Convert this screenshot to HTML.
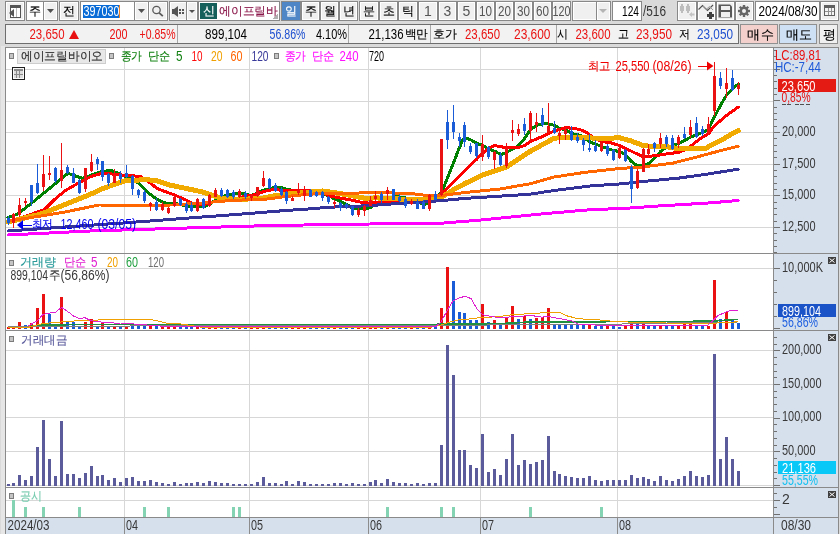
<!DOCTYPE html><html><head><meta charset="utf-8"><style>html,body{margin:0;padding:0;background:#d6d6d6;overflow:hidden}svg{display:block;will-change:transform}text{font-family:"Liberation Sans",sans-serif}</style></head><body><svg width="840" height="534" viewBox="0 0 840 534" font-family='"Liberation Sans", sans-serif' shape-rendering="crispEdges">
<rect x="0" y="0" width="840" height="534" fill="#dadada" />
<rect x="1" y="46" width="4" height="534" fill="#e6e6e6" />
<rect x="5" y="1" width="20" height="20" fill="#888888" />
<rect x="6" y="2" width="18" height="18" fill="#ffffff" />
<rect x="7" y="3" width="16" height="16" fill="#f0f0f0" />
<rect x="10" y="5" width="11" height="13" fill="#555555" />
<rect x="11" y="8" width="9" height="9" fill="#ffffff" />
<rect x="16" y="8" width="1" height="9" fill="#b8b8b8" />
<polygon points="9,13 14,9 14,17" fill="#555555" shape-rendering="auto"/>
<rect x="26" y="1" width="18" height="20" fill="#888888" />
<rect x="27" y="2" width="16" height="18" fill="#ffffff" />
<rect x="28" y="3" width="14" height="16" fill="#ffffff" />
<rect x="43" y="1" width="15" height="20" fill="#888888" />
<rect x="44" y="2" width="13" height="18" fill="#ffffff" />
<rect x="45" y="3" width="11" height="16" fill="#f0f0f0" />
<text x="34.5" y="16" fill="#000" font-size="14" text-anchor="middle" ><tspan font-size="12" baseline-shift="1" stroke="#000" stroke-width="0.15">주</tspan></text>
<polygon points="47,9 54,9 50.5,13" fill="#505050" shape-rendering="auto"/>
<rect x="59" y="1" width="20" height="20" fill="#888888" />
<rect x="60" y="2" width="18" height="18" fill="#ffffff" />
<rect x="61" y="3" width="16" height="16" fill="#f0f0f0" />
<text x="68.5" y="16" fill="#000" font-size="14" text-anchor="middle" ><tspan font-size="12" baseline-shift="1" stroke="#000" stroke-width="0.15">전</tspan></text>
<rect x="80" y="1" width="55" height="20" fill="#888888" />
<rect x="81" y="2" width="53" height="18" fill="#ffffff" />
<rect x="82" y="3" width="51" height="16" fill="#ffffff" />
<rect x="83" y="5" width="37" height="13" fill="#0a6cd6" />
<text x="83.5" y="16" fill="#ffffff" font-size="14" text-anchor="start" textLength="36" lengthAdjust="spacingAndGlyphs" >397030</text>
<rect x="119" y="5" width="1" height="13" fill="#f08020" />
<rect x="134" y="1" width="15" height="20" fill="#888888" />
<rect x="135" y="2" width="13" height="18" fill="#ffffff" />
<rect x="136" y="3" width="11" height="16" fill="#f0f0f0" />
<polygon points="138,9 145,9 141.5,13" fill="#505050" shape-rendering="auto"/>
<rect x="148" y="1" width="20" height="20" fill="#888888" />
<rect x="149" y="2" width="18" height="18" fill="#ffffff" />
<rect x="150" y="3" width="16" height="16" fill="#f0f0f0" />
<circle cx="156.5" cy="10" r="3.7" fill="none" stroke="#5a5a5a" stroke-width="1.3" shape-rendering="auto"/>
<line x1="159.2" y1="12.8" x2="162.8" y2="16.2" stroke="#5a5a5a" stroke-width="1.8" shape-rendering="auto"/>
<rect x="169" y="1" width="19" height="20" fill="#888888" />
<rect x="170" y="2" width="17" height="18" fill="#ffffff" />
<rect x="171" y="3" width="15" height="16" fill="#f0f0f0" />
<rect x="186" y="1" width="12" height="20" fill="#888888" />
<rect x="187" y="2" width="10" height="18" fill="#ffffff" />
<rect x="188" y="3" width="8" height="16" fill="#f0f0f0" />
<polygon points="172,9 174,9 178,6 178,17 174,14 172,14" fill="#555555" shape-rendering="auto"/>
<rect x="179" y="9" width="2" height="2" fill="#555555" />
<rect x="182" y="9" width="2" height="2" fill="#555555" />
<rect x="179" y="12" width="2" height="2" fill="#555555" />
<rect x="182" y="12" width="2" height="2" fill="#555555" />
<polygon points="189,10 195,10 192,13" fill="#505050" shape-rendering="auto"/>
<rect x="198" y="1" width="82" height="20" fill="#888888" />
<rect x="199" y="2" width="80" height="18" fill="#ffffff" />
<rect x="200" y="3" width="78" height="16" fill="#ffffff" />
<rect x="200" y="3" width="17" height="16" fill="#16605c" />
<text x="208.5" y="16" fill="#ffffff" font-size="14" text-anchor="middle" ><tspan font-size="12" baseline-shift="1" stroke="#ffffff" stroke-width="0.15">신</tspan></text>
<text x="219" y="16" fill="#8c1a4c" font-size="14" text-anchor="start" textLength="59" lengthAdjust="spacingAndGlyphs" ><tspan font-size="12" baseline-shift="1" stroke="#8c1a4c" stroke-width="0.15">에이프릴바</tspan></text>
<polygon points="278,13 278,19 272,19" fill="#b0b0b0"/>
<rect x="281" y="1" width="20" height="20" fill="#888888" />
<rect x="282" y="2" width="18" height="18" fill="#4f86c6" />
<text x="291.0" y="16" fill="#ffffff" font-size="14" text-anchor="middle" ><tspan font-size="12" baseline-shift="1" stroke="#ffffff" stroke-width="0.15">일</tspan></text>
<rect x="301" y="1" width="19" height="20" fill="#888888" />
<rect x="302" y="2" width="17" height="18" fill="#ffffff" />
<rect x="303" y="3" width="15" height="16" fill="#f0f0f0" />
<text x="310.5" y="16" fill="#000" font-size="14" text-anchor="middle" ><tspan font-size="12" baseline-shift="1" stroke="#000" stroke-width="0.15">주</tspan></text>
<rect x="320" y="1" width="19" height="20" fill="#888888" />
<rect x="321" y="2" width="17" height="18" fill="#ffffff" />
<rect x="322" y="3" width="15" height="16" fill="#f0f0f0" />
<text x="329.5" y="16" fill="#000" font-size="14" text-anchor="middle" ><tspan font-size="12" baseline-shift="1" stroke="#000" stroke-width="0.15">월</tspan></text>
<rect x="339" y="1" width="19" height="20" fill="#888888" />
<rect x="340" y="2" width="17" height="18" fill="#ffffff" />
<rect x="341" y="3" width="15" height="16" fill="#f0f0f0" />
<text x="348.5" y="16" fill="#000" font-size="14" text-anchor="middle" ><tspan font-size="12" baseline-shift="1" stroke="#000" stroke-width="0.15">년</tspan></text>
<rect x="359" y="1" width="20" height="20" fill="#888888" />
<rect x="360" y="2" width="18" height="18" fill="#ffffff" />
<rect x="361" y="3" width="16" height="16" fill="#f0f0f0" />
<text x="369.0" y="16" fill="#000" font-size="14" text-anchor="middle" ><tspan font-size="12" baseline-shift="1" stroke="#000" stroke-width="0.15">분</tspan></text>
<rect x="379" y="1" width="19" height="20" fill="#888888" />
<rect x="380" y="2" width="17" height="18" fill="#ffffff" />
<rect x="381" y="3" width="15" height="16" fill="#f0f0f0" />
<text x="388.5" y="16" fill="#000" font-size="14" text-anchor="middle" ><tspan font-size="12" baseline-shift="1" stroke="#000" stroke-width="0.15">초</tspan></text>
<rect x="398" y="1" width="20" height="20" fill="#888888" />
<rect x="399" y="2" width="18" height="18" fill="#ffffff" />
<rect x="400" y="3" width="16" height="16" fill="#f0f0f0" />
<text x="408.0" y="16" fill="#000" font-size="14" text-anchor="middle" ><tspan font-size="12" baseline-shift="1" stroke="#000" stroke-width="0.15">틱</tspan></text>
<rect x="418" y="1" width="20" height="20" fill="#888888" />
<rect x="419" y="2" width="18" height="18" fill="#ffffff" />
<rect x="420" y="3" width="16" height="16" fill="#f0f0f0" />
<text x="428.0" y="16" fill="#555555" font-size="14" text-anchor="middle" >1</text>
<rect x="438" y="1" width="19" height="20" fill="#888888" />
<rect x="439" y="2" width="17" height="18" fill="#ffffff" />
<rect x="440" y="3" width="15" height="16" fill="#f0f0f0" />
<text x="447.5" y="16" fill="#555555" font-size="14" text-anchor="middle" >3</text>
<rect x="457" y="1" width="19" height="20" fill="#888888" />
<rect x="458" y="2" width="17" height="18" fill="#ffffff" />
<rect x="459" y="3" width="15" height="16" fill="#f0f0f0" />
<text x="466.5" y="16" fill="#555555" font-size="14" text-anchor="middle" >5</text>
<rect x="476" y="1" width="19" height="20" fill="#888888" />
<rect x="477" y="2" width="17" height="18" fill="#ffffff" />
<rect x="478" y="3" width="15" height="16" fill="#f0f0f0" />
<text x="485.5" y="16" fill="#555555" font-size="14" text-anchor="middle" textLength="13" lengthAdjust="spacingAndGlyphs" >10</text>
<rect x="495" y="1" width="19" height="20" fill="#888888" />
<rect x="496" y="2" width="17" height="18" fill="#ffffff" />
<rect x="497" y="3" width="15" height="16" fill="#f0f0f0" />
<text x="504.5" y="16" fill="#555555" font-size="14" text-anchor="middle" textLength="13" lengthAdjust="spacingAndGlyphs" >20</text>
<rect x="514" y="1" width="19" height="20" fill="#888888" />
<rect x="515" y="2" width="17" height="18" fill="#ffffff" />
<rect x="516" y="3" width="15" height="16" fill="#f0f0f0" />
<text x="523.5" y="16" fill="#555555" font-size="14" text-anchor="middle" textLength="13" lengthAdjust="spacingAndGlyphs" >30</text>
<rect x="533" y="1" width="19" height="20" fill="#888888" />
<rect x="534" y="2" width="17" height="18" fill="#ffffff" />
<rect x="535" y="3" width="15" height="16" fill="#f0f0f0" />
<text x="542.5" y="16" fill="#555555" font-size="14" text-anchor="middle" textLength="13" lengthAdjust="spacingAndGlyphs" >60</text>
<rect x="552" y="1" width="19" height="20" fill="#888888" />
<rect x="553" y="2" width="17" height="18" fill="#ffffff" />
<rect x="554" y="3" width="15" height="16" fill="#f0f0f0" />
<text x="561.5" y="16" fill="#555555" font-size="14" text-anchor="middle" textLength="18" lengthAdjust="spacingAndGlyphs" >120</text>
<rect x="572" y="1" width="26" height="20" fill="#888888" />
<rect x="573" y="2" width="24" height="18" fill="#ffffff" />
<rect x="574" y="3" width="22" height="16" fill="#f0f0f0" />
<rect x="596" y="1" width="15" height="20" fill="#888888" />
<rect x="597" y="2" width="13" height="18" fill="#ffffff" />
<rect x="598" y="3" width="11" height="16" fill="#f0f0f0" />
<polygon points="599,9 607,9 603,13" fill="#b4b4b4" shape-rendering="auto"/>
<rect x="612" y="1" width="30" height="20" fill="#888888" />
<rect x="613" y="2" width="28" height="18" fill="#ffffff" />
<rect x="614" y="3" width="26" height="16" fill="#ffffff" />
<text x="622" y="16" fill="#000" font-size="14" text-anchor="start" textLength="17" lengthAdjust="spacingAndGlyphs" >124</text>
<text x="643" y="16" fill="#333333" font-size="14" text-anchor="start" textLength="23" lengthAdjust="spacingAndGlyphs" >/516</text>
<rect x="677" y="1" width="20" height="20" fill="#888888" />
<rect x="678" y="2" width="18" height="18" fill="#ffffff" />
<rect x="679" y="3" width="16" height="16" fill="#f0f0f0" />
<rect x="697" y="1" width="19" height="20" fill="#888888" />
<rect x="698" y="2" width="17" height="18" fill="#ffffff" />
<rect x="699" y="3" width="15" height="16" fill="#f0f0f0" />
<rect x="716" y="1" width="19" height="20" fill="#888888" />
<rect x="717" y="2" width="17" height="18" fill="#ffffff" />
<rect x="718" y="3" width="15" height="16" fill="#f0f0f0" />
<rect x="735" y="1" width="19" height="20" fill="#888888" />
<rect x="736" y="2" width="17" height="18" fill="#ffffff" />
<rect x="737" y="3" width="15" height="16" fill="#f0f0f0" />
<rect x="680" y="6" width="4" height="5" fill="#bdbdbd" />
<rect x="681" y="4" width="2" height="9" fill="#bdbdbd" />
<rect x="686" y="6" width="4" height="5" fill="#bdbdbd" />
<rect x="687" y="4" width="2" height="9" fill="#bdbdbd" />
<polygon points="689,14.5 692,12 692,13.5 694.5,13.5 694.5,15.5 692,15.5 692,17" fill="#c4c4c4" shape-rendering="auto"/>
<polyline points="698.5,9.5 702.5,5.5 707.5,10.5 713,5" fill="none" stroke="#505050" stroke-width="1.1" shape-rendering="auto"/>
<polyline points="703,6 706,9.5 709.5,6.5 713,10" fill="none" stroke="#9a9a9a" stroke-width="1" shape-rendering="auto"/>
<rect x="707" y="14" width="7" height="3" fill="#404040" />
<rect x="709" y="12" width="3" height="7" fill="#404040" />
<polygon points="718.5,4.5 730,4.5 732,6.5 732,17.5 718.5,17.5" fill="#5a5a5a" shape-rendering="auto"/>
<rect x="720" y="6" width="10" height="4" fill="#f0f0f0" />
<rect x="721" y="12" width="9" height="5" fill="#f0f0f0" />
<rect x="720" y="6" width="1" height="11" fill="#5a5a5a" />
<circle cx="744" cy="11" r="4.4" fill="#666666" shape-rendering="auto"/>
<line x1="744" y1="11" x2="750.00" y2="11.00" stroke="#666666" stroke-width="2.4" shape-rendering="auto"/>
<line x1="744" y1="11" x2="748.24" y2="15.24" stroke="#666666" stroke-width="2.4" shape-rendering="auto"/>
<line x1="744" y1="11" x2="744.00" y2="17.00" stroke="#666666" stroke-width="2.4" shape-rendering="auto"/>
<line x1="744" y1="11" x2="739.76" y2="15.24" stroke="#666666" stroke-width="2.4" shape-rendering="auto"/>
<line x1="744" y1="11" x2="738.00" y2="11.00" stroke="#666666" stroke-width="2.4" shape-rendering="auto"/>
<line x1="744" y1="11" x2="739.76" y2="6.76" stroke="#666666" stroke-width="2.4" shape-rendering="auto"/>
<line x1="744" y1="11" x2="744.00" y2="5.00" stroke="#666666" stroke-width="2.4" shape-rendering="auto"/>
<line x1="744" y1="11" x2="748.24" y2="6.76" stroke="#666666" stroke-width="2.4" shape-rendering="auto"/>
<circle cx="744" cy="11" r="2" fill="#f0f0f0" shape-rendering="auto"/>
<rect x="755" y="1" width="65" height="20" fill="#888888" />
<rect x="756" y="2" width="63" height="18" fill="#ffffff" />
<rect x="757" y="3" width="61" height="16" fill="#ffffff" />
<text x="758.5" y="16" fill="#000" font-size="14" text-anchor="start" textLength="59" lengthAdjust="spacingAndGlyphs" >2024/08/30</text>
<rect x="820" y="1" width="19" height="20" fill="#888888" />
<rect x="821" y="2" width="17" height="18" fill="#ffffff" />
<rect x="822" y="3" width="15" height="16" fill="#f0f0f0" />
<rect x="824" y="5" width="11" height="11" fill="#606060" />
<rect x="825" y="8" width="9" height="7" fill="#f4f4f4" />
<rect x="828" y="8" width="1" height="7" fill="#909090" />
<rect x="831" y="8" width="1" height="7" fill="#909090" />
<rect x="825" y="11" width="9" height="1" fill="#909090" />
<rect x="5" y="24" width="734" height="20" fill="#6e6e6e" />
<rect x="6" y="25" width="732" height="18" fill="#f2f2f2" />
<rect x="177" y="25" width="1" height="18" fill="#a8a8a8" />
<rect x="348" y="25" width="1" height="18" fill="#a8a8a8" />
<rect x="430" y="25" width="1" height="18" fill="#a8a8a8" />
<rect x="556" y="25" width="1" height="18" fill="#a8a8a8" />
<text x="29.5" y="39" fill="#ea1212" font-size="14" text-anchor="start" textLength="35" lengthAdjust="spacingAndGlyphs" >23,650</text>
<polygon points="69,39 79,39 74,30" fill="#e81010" shape-rendering="auto"/>
<text x="109.5" y="39" fill="#ea1212" font-size="14" text-anchor="start" textLength="18" lengthAdjust="spacingAndGlyphs" >200</text>
<text x="139.5" y="39" fill="#ea1212" font-size="14" text-anchor="start" textLength="36" lengthAdjust="spacingAndGlyphs" >+0.85%</text>
<text x="205" y="39" fill="#000" font-size="14" text-anchor="start" textLength="42" lengthAdjust="spacingAndGlyphs" >899,104</text>
<text x="269.5" y="39" fill="#1f50d0" font-size="14" text-anchor="start" textLength="36" lengthAdjust="spacingAndGlyphs" >56.86%</text>
<text x="316" y="39" fill="#000" font-size="14" text-anchor="start" textLength="31" lengthAdjust="spacingAndGlyphs" >4.10%</text>
<text x="368.5" y="39" fill="#000" font-size="14" text-anchor="start" textLength="35" lengthAdjust="spacingAndGlyphs" >21,136</text>
<text x="404.5" y="39" fill="#000" font-size="14" text-anchor="start" textLength="23.5" lengthAdjust="spacingAndGlyphs" ><tspan font-size="12" baseline-shift="1" stroke="#000" stroke-width="0.15">백만</tspan></text>
<text x="433" y="39" fill="#000" font-size="14" text-anchor="start" textLength="24" lengthAdjust="spacingAndGlyphs" ><tspan font-size="12" baseline-shift="1" stroke="#000" stroke-width="0.15">호가</tspan></text>
<text x="465" y="39" fill="#ea1212" font-size="14" text-anchor="start" textLength="35" lengthAdjust="spacingAndGlyphs" >23,650</text>
<text x="514" y="39" fill="#ea1212" font-size="14" text-anchor="start" textLength="36.5" lengthAdjust="spacingAndGlyphs" >23,600</text>
<text x="557" y="39" fill="#000" font-size="14" text-anchor="start" textLength="11" lengthAdjust="spacingAndGlyphs" ><tspan font-size="12" baseline-shift="1" stroke="#000" stroke-width="0.15">시</tspan></text>
<text x="575.5" y="39" fill="#ea1212" font-size="14" text-anchor="start" textLength="35" lengthAdjust="spacingAndGlyphs" >23,600</text>
<text x="618" y="39" fill="#000" font-size="14" text-anchor="start" textLength="11" lengthAdjust="spacingAndGlyphs" ><tspan font-size="12" baseline-shift="1" stroke="#000" stroke-width="0.15">고</tspan></text>
<text x="636" y="39" fill="#ea1212" font-size="14" text-anchor="start" textLength="36" lengthAdjust="spacingAndGlyphs" >23,950</text>
<text x="679" y="39" fill="#000" font-size="14" text-anchor="start" textLength="11" lengthAdjust="spacingAndGlyphs" ><tspan font-size="12" baseline-shift="1" stroke="#000" stroke-width="0.15">저</tspan></text>
<text x="697" y="39" fill="#1f50d0" font-size="14" text-anchor="start" textLength="36" lengthAdjust="spacingAndGlyphs" >23,050</text>
<rect x="740" y="24" width="38" height="20" fill="#909090" />
<rect x="741" y="25" width="36" height="18" fill="#f4d0cc" />
<rect x="742" y="26" width="34" height="16" fill="#f4d0cc" />
<text x="747" y="39.5" fill="#000" font-size="14" text-anchor="start" ><tspan font-size="12.5" baseline-shift="1" stroke="#000" stroke-width="0.15">매</tspan></text>
<text x="760.5" y="39.5" fill="#000" font-size="14" text-anchor="start" ><tspan font-size="12.5" baseline-shift="1" stroke="#000" stroke-width="0.15">수</tspan></text>
<rect x="779" y="24" width="38" height="20" fill="#909090" />
<rect x="780" y="25" width="36" height="18" fill="#cde0f4" />
<rect x="781" y="26" width="34" height="16" fill="#cde0f4" />
<text x="785.5" y="39.5" fill="#000" font-size="14" text-anchor="start" ><tspan font-size="12.5" baseline-shift="1" stroke="#000" stroke-width="0.15">매</tspan></text>
<text x="799" y="39.5" fill="#000" font-size="14" text-anchor="start" ><tspan font-size="12.5" baseline-shift="1" stroke="#000" stroke-width="0.15">도</tspan></text>
<rect x="819" y="24" width="19" height="20" fill="#909090" />
<rect x="820" y="25" width="17" height="18" fill="#f0f0f0" />
<rect x="821" y="26" width="15" height="16" fill="#f0f0f0" />
<text x="822.5" y="39.5" fill="#000" font-size="14" text-anchor="start" ><tspan font-size="12.5" baseline-shift="1" stroke="#000" stroke-width="0.15">평</tspan></text>
<rect x="5" y="47" width="834" height="487" fill="#8a8a8a" />
<rect x="6" y="48" width="767" height="486" fill="#ffffff" />
<rect x="774" y="48" width="64" height="486" fill="#d6e0ed" />
<rect x="6" y="253" width="832" height="1" fill="#8a8a8a" />
<rect x="6" y="330" width="832" height="1" fill="#8a8a8a" />
<rect x="6" y="487" width="832" height="1" fill="#8a8a8a" />
<rect x="6" y="517" width="832" height="1" fill="#8a8a8a" />
<rect x="773" y="48" width="1" height="486" fill="#8a8a8a" />
<rect x="6" y="518" width="767" height="16" fill="#d6e0ed" />
<rect x="6" y="69" width="767" height="1" fill="#d7d7d7" />
<rect x="6" y="101" width="767" height="1" fill="#d7d7d7" />
<rect x="6" y="132" width="767" height="1" fill="#d7d7d7" />
<rect x="6" y="164" width="767" height="1" fill="#d7d7d7" />
<rect x="6" y="195" width="767" height="1" fill="#d7d7d7" />
<rect x="6" y="227" width="767" height="1" fill="#d7d7d7" />
<rect x="6" y="268" width="767" height="1" fill="#d7d7d7" />
<rect x="6" y="350" width="767" height="1" fill="#d7d7d7" />
<rect x="6" y="384" width="767" height="1" fill="#d7d7d7" />
<rect x="6" y="417" width="767" height="1" fill="#d7d7d7" />
<rect x="6" y="451" width="767" height="1" fill="#d7d7d7" />
<rect x="6" y="485" width="767" height="1" fill="#d7d7d7" />
<rect x="6" y="500" width="767" height="1" fill="#d7d7d7" />
<rect x="124" y="48" width="1" height="205" fill="#d7d7d7" />
<rect x="124" y="254" width="1" height="76" fill="#d7d7d7" />
<rect x="124" y="331" width="1" height="156" fill="#d7d7d7" />
<rect x="124" y="488" width="1" height="29" fill="#d7d7d7" />
<rect x="124" y="518" width="1" height="16" fill="#8c8c8c" />
<rect x="249" y="48" width="1" height="205" fill="#d7d7d7" />
<rect x="249" y="254" width="1" height="76" fill="#d7d7d7" />
<rect x="249" y="331" width="1" height="156" fill="#d7d7d7" />
<rect x="249" y="488" width="1" height="29" fill="#d7d7d7" />
<rect x="249" y="518" width="1" height="16" fill="#8c8c8c" />
<rect x="368" y="48" width="1" height="205" fill="#d7d7d7" />
<rect x="368" y="254" width="1" height="76" fill="#d7d7d7" />
<rect x="368" y="331" width="1" height="156" fill="#d7d7d7" />
<rect x="368" y="488" width="1" height="29" fill="#d7d7d7" />
<rect x="368" y="518" width="1" height="16" fill="#8c8c8c" />
<rect x="480" y="48" width="1" height="205" fill="#d7d7d7" />
<rect x="480" y="254" width="1" height="76" fill="#d7d7d7" />
<rect x="480" y="331" width="1" height="156" fill="#d7d7d7" />
<rect x="480" y="488" width="1" height="29" fill="#d7d7d7" />
<rect x="480" y="518" width="1" height="16" fill="#8c8c8c" />
<rect x="617" y="48" width="1" height="205" fill="#d7d7d7" />
<rect x="617" y="254" width="1" height="76" fill="#d7d7d7" />
<rect x="617" y="331" width="1" height="156" fill="#d7d7d7" />
<rect x="617" y="488" width="1" height="29" fill="#d7d7d7" />
<rect x="617" y="518" width="1" height="16" fill="#8c8c8c" />
<rect x="9" y="53" width="5" height="6" fill="#7c7c7c" />
<rect x="10" y="54" width="3" height="4" fill="#c4c4c4" />
<rect x="17" y="49" width="89" height="15" fill="#cdcdcd" />
<rect x="18" y="50" width="87" height="13" fill="#e8e8e8" />
<text x="21" y="61" fill="#303030" font-size="14" text-anchor="start" textLength="82" lengthAdjust="spacingAndGlyphs" ><tspan font-size="12" baseline-shift="1" stroke="#303030" stroke-width="0.15">에이프릴바이오</tspan></text>
<rect x="109" y="53" width="5" height="6" fill="#7c7c7c" />
<rect x="110" y="54" width="3" height="4" fill="#c4c4c4" />
<text x="120.5" y="61" fill="#108010" font-size="14" text-anchor="start" textLength="21.5" lengthAdjust="spacingAndGlyphs" ><tspan font-size="12" baseline-shift="1" stroke="#108010" stroke-width="0.15">종가</tspan></text>
<text x="148" y="61" fill="#108010" font-size="14" text-anchor="start" textLength="22.5" lengthAdjust="spacingAndGlyphs" ><tspan font-size="12" baseline-shift="1" stroke="#108010" stroke-width="0.15">단순</tspan></text>
<text x="176" y="61" fill="#108010" font-size="14" text-anchor="start" textLength="6.5" lengthAdjust="spacingAndGlyphs" >5</text>
<text x="191.5" y="61" fill="#ff0a0a" font-size="14" text-anchor="start" textLength="11" lengthAdjust="spacingAndGlyphs" >10</text>
<text x="211" y="61" fill="#f0a000" font-size="14" text-anchor="start" textLength="11.5" lengthAdjust="spacingAndGlyphs" >20</text>
<text x="230.5" y="61" fill="#ff6400" font-size="14" text-anchor="start" textLength="12" lengthAdjust="spacingAndGlyphs" >60</text>
<text x="251.5" y="61" fill="#3a3a9a" font-size="14" text-anchor="start" textLength="17" lengthAdjust="spacingAndGlyphs" >120</text>
<rect x="274" y="53" width="5" height="6" fill="#7c7c7c" />
<rect x="275" y="54" width="3" height="4" fill="#c4c4c4" />
<text x="284.5" y="61" fill="#ff10ff" font-size="14" text-anchor="start" textLength="21.5" lengthAdjust="spacingAndGlyphs" ><tspan font-size="12" baseline-shift="1" stroke="#ff10ff" stroke-width="0.15">종가</tspan></text>
<text x="312" y="61" fill="#ff10ff" font-size="14" text-anchor="start" textLength="22.5" lengthAdjust="spacingAndGlyphs" ><tspan font-size="12" baseline-shift="1" stroke="#ff10ff" stroke-width="0.15">단순</tspan></text>
<text x="339.5" y="61" fill="#ff10ff" font-size="14" text-anchor="start" textLength="19" lengthAdjust="spacingAndGlyphs" >240</text>
<text x="369" y="61" fill="#000" font-size="14" text-anchor="start" textLength="15" lengthAdjust="spacingAndGlyphs" >720</text>
<rect x="12" y="67" width="13" height="13" fill="#202020" />
<rect x="13" y="68" width="11" height="11" fill="#f8f8f8" />
<rect x="14" y="69" width="9" height="2" fill="#8a8a8a" />
<rect x="14" y="71" width="9" height="7" fill="#dcdcdc" />
<rect x="16" y="71" width="1" height="7" fill="#8a8a8a" />
<rect x="19" y="71" width="1" height="7" fill="#8a8a8a" />
<rect x="14" y="74" width="9" height="1" fill="#8a8a8a" />
<g shape-rendering="crispEdges" stroke-linecap="round">
<polyline points="8.0,217.5 18.0,214.0 36.0,199.5 50.0,188.0 65.0,175.5 68.0,173.3 82.4,178.4 99.0,172.2 111.0,170.2 124.0,176.0 132.6,179.6 138.6,183.0 144.5,189.0 150.4,194.5 156.4,199.0 162.3,202.0 168.2,203.7 174.2,203.2 186.0,205.8 192.0,206.6 198.0,206.0 204.0,206.6 210.0,204.0 215.7,200.0 221.7,197.3 227.6,194.8 233.5,194.0 239.5,193.2 245.4,194.0 251.3,195.7 263.2,190.2 275.1,187.2 281.0,187.2 287.0,189.5 298.8,191.0 310.7,191.0 322.6,193.3 328.5,195.7 334.4,198.8 346.3,204.2 352.2,208.0 358.2,208.8 364.1,208.8 370.0,207.8 376.0,203.9 381.9,201.6 393.8,196.4 405.6,197.9 417.5,201.6 423.5,204.6 429.4,203.1 435.3,197.0 441.3,193.0 447.3,178.5 453.1,164.0 459.0,148.5 463.0,139.5 465.0,137.7 470.9,140.0 477.0,143.3 482.8,145.6 488.9,149.0 494.7,151.2 500.8,154.6 506.6,152.3 512.5,149.0 518.5,145.6 524.4,138.8 530.3,130.0 536.4,125.3 542.2,123.8 548.1,123.8 554.2,125.3 560.0,128.7 566.0,129.8 571.9,133.5 581.0,135.5 589.0,141.5 601.6,146.5 613.5,150.5 619.4,151.5 625.3,154.6 631.3,161.3 637.2,165.8 643.3,165.5 649.1,163.5 655.2,157.5 661.0,151.0 666.9,147.0 672.9,145.6 678.8,143.3 684.6,140.5 690.8,137.0 702.5,132.5 708.5,129.2 714.4,116.8 720.4,105.6 726.3,95.4 732.4,88.7 738.2,84.2" fill="none" stroke="#008000" stroke-width="3" stroke-linejoin="round" />
<polyline points="8.0,221.0 19.6,218.4 44.5,209.5 53.4,200.5 65.0,190.8 79.3,182.5 91.3,176.4 103.0,173.0 115.0,174.3 127.0,175.5 140.2,176.3 150.4,183.0 156.4,188.0 162.3,190.6 174.1,194.8 186.1,200.0 192.0,203.2 197.9,204.0 203.8,205.0 209.9,202.4 215.8,201.6 221.7,200.7 233.5,200.0 245.5,196.0 251.3,195.7 263.2,191.8 269.1,190.2 275.1,189.5 286.9,191.0 304.7,190.2 316.6,191.0 322.7,192.6 328.5,195.7 340.3,198.0 352.2,200.3 364.1,202.8 370.0,203.1 381.9,202.4 393.8,200.9 405.5,200.1 417.5,200.1 429.5,199.4 435.3,198.0 441.3,194.0 453.1,182.3 465.0,170.6 477.0,158.9 482.8,153.0 488.9,147.8 494.7,145.6 500.8,146.7 506.6,147.8 518.5,147.5 524.4,145.6 530.3,141.5 542.2,136.6 554.2,131.0 566.0,127.6 571.9,128.3 580.0,129.5 586.0,132.0 591.0,136.0 601.0,141.5 610.0,142.5 619.4,145.5 631.3,151.2 643.3,156.8 655.2,155.7 666.9,153.9 678.8,152.3 684.6,150.0 690.8,146.0 702.5,137.0 708.5,133.7 714.4,125.8 726.3,115.7 732.4,111.2 738.2,107.1" fill="none" stroke="#ff0000" stroke-width="3" stroke-linejoin="round" />
<polyline points="8.0,222.0 41.0,214.0 65.0,204.5 86.5,196.0 103.0,188.5 127.0,180.0 132.6,180.5 144.5,179.6 156.4,180.5 168.2,184.7 180.1,187.2 192.0,189.7 203.8,192.3 215.8,196.5 221.7,198.0 233.5,199.0 245.5,199.2 263.2,198.0 275.1,195.7 286.9,194.1 304.7,192.6 322.7,191.0 334.4,192.6 352.2,195.7 365.0,198.3 376.0,197.9 393.8,198.7 405.5,199.4 417.5,199.4 429.5,200.0 441.3,197.5 453.0,190.0 465.0,183.5 482.8,175.0 506.4,167.0 520.0,158.0 530.0,151.5 536.4,148.0 554.2,138.2 566.0,137.5 583.8,137.6 601.6,138.5 619.4,137.8 631.3,141.0 643.3,145.6 655.2,146.7 666.9,146.7 678.8,148.8 690.8,149.0 705.0,148.7 713.3,144.0 723.5,139.0 732.4,133.5 738.2,130.5" fill="none" stroke="#f0aa00" stroke-width="5" stroke-linejoin="round" />
<polyline points="8.0,221.0 41.0,216.0 65.0,212.0 99.0,205.0 127.0,205.2 174.1,205.0 186.1,204.0 203.8,203.2 215.8,201.6 233.5,200.5 250.0,199.5 263.2,199.5 287.0,196.4 310.7,194.1 328.5,193.3 352.2,193.3 370.0,192.5 381.9,192.7 405.5,193.4 417.5,194.2 429.5,196.0 441.3,195.5 465.0,192.5 500.0,189.0 530.0,183.8 554.2,177.0 583.8,172.5 619.3,168.5 643.3,166.9 672.6,163.2 695.0,157.5 718.0,151.3 738.2,146.2" fill="none" stroke="#ff6600" stroke-width="3" stroke-linejoin="round" />
<polyline points="8.0,231.0 130.0,222.5 250.0,213.4 287.0,210.4 310.7,208.8 328.5,207.3 346.3,206.5 370.0,205.7 381.9,204.6 405.5,203.1 429.5,201.6 450.0,199.8 465.0,198.4 500.8,196.1 530.0,194.2 554.2,190.5 589.7,186.0 619.3,184.0 643.3,181.5 678.8,178.1 710.0,173.7 738.2,169.2" fill="none" stroke="#333399" stroke-width="3" stroke-linejoin="round" />
<polyline points="8.0,235.0 90.0,231.0 181.0,228.2 271.0,225.5 370.0,224.0 438.0,223.5 481.0,220.0 543.0,213.8 587.0,210.0 630.0,208.0 655.0,206.2 710.0,202.9 738.2,200.5" fill="none" stroke="#ff00ff" stroke-width="3" stroke-linejoin="round" />
</g>
<rect x="8" y="216" width="1" height="9" fill="#1a5cd8" />
<rect x="7" y="218" width="3" height="5" fill="#1a5cd8" />
<rect x="13" y="213" width="1" height="15" fill="#ea1212" />
<rect x="12" y="214" width="3" height="9" fill="#ea1212" />
<rect x="19" y="198" width="1" height="19" fill="#ea1212" />
<rect x="18" y="205" width="3" height="10" fill="#ea1212" />
<rect x="25" y="198" width="1" height="8" fill="#ea1212" />
<rect x="24" y="201" width="3" height="2" fill="#ea1212" />
<rect x="31" y="185" width="1" height="21" fill="#1a5cd8" />
<rect x="30" y="185" width="3" height="17" fill="#1a5cd8" />
<rect x="37" y="164" width="1" height="30" fill="#1a5cd8" />
<rect x="36" y="183" width="3" height="10" fill="#1a5cd8" />
<rect x="43" y="155" width="1" height="36" fill="#ea1212" />
<rect x="42" y="174" width="3" height="13" fill="#ea1212" />
<rect x="49" y="156" width="1" height="24" fill="#ea1212" />
<rect x="48" y="173" width="3" height="2" fill="#ea1212" />
<rect x="55" y="167" width="1" height="16" fill="#1a5cd8" />
<rect x="54" y="168" width="3" height="13" fill="#1a5cd8" />
<rect x="61" y="143" width="1" height="45" fill="#ea1212" />
<rect x="60" y="170" width="3" height="11" fill="#ea1212" />
<rect x="67" y="165" width="1" height="9" fill="#1a5cd8" />
<rect x="66" y="167" width="3" height="6" fill="#1a5cd8" />
<rect x="73" y="168" width="1" height="15" fill="#1a5cd8" />
<rect x="72" y="173" width="3" height="10" fill="#1a5cd8" />
<rect x="79" y="179" width="1" height="15" fill="#1a5cd8" />
<rect x="78" y="180" width="3" height="13" fill="#1a5cd8" />
<rect x="85" y="168" width="1" height="24" fill="#ea1212" />
<rect x="84" y="168" width="3" height="21" fill="#ea1212" />
<rect x="91" y="154" width="1" height="18" fill="#ea1212" />
<rect x="90" y="162" width="3" height="9" fill="#ea1212" />
<rect x="97" y="157" width="1" height="13" fill="#1a5cd8" />
<rect x="96" y="159" width="3" height="5" fill="#1a5cd8" />
<rect x="102" y="161" width="1" height="20" fill="#1a5cd8" />
<rect x="101" y="161" width="3" height="16" fill="#1a5cd8" />
<rect x="108" y="173" width="1" height="13" fill="#1a5cd8" />
<rect x="107" y="174" width="3" height="9" fill="#1a5cd8" />
<rect x="114" y="169" width="1" height="14" fill="#ea1212" />
<rect x="113" y="175" width="3" height="8" fill="#ea1212" />
<rect x="120" y="171" width="1" height="12" fill="#1a5cd8" />
<rect x="119" y="174" width="3" height="5" fill="#1a5cd8" />
<rect x="126" y="165" width="1" height="13" fill="#1a5cd8" />
<rect x="125" y="173" width="3" height="4" fill="#1a5cd8" />
<rect x="132" y="175" width="1" height="20" fill="#1a5cd8" />
<rect x="131" y="176" width="3" height="13" fill="#1a5cd8" />
<rect x="138" y="189" width="1" height="9" fill="#1a5cd8" />
<rect x="137" y="190" width="3" height="5" fill="#1a5cd8" />
<rect x="144" y="190" width="1" height="13" fill="#1a5cd8" />
<rect x="143" y="192" width="3" height="9" fill="#1a5cd8" />
<rect x="150" y="202" width="1" height="9" fill="#ea1212" />
<rect x="149" y="203" width="3" height="3" fill="#ea1212" />
<rect x="156" y="198" width="1" height="13" fill="#1a5cd8" />
<rect x="155" y="202" width="3" height="8" fill="#1a5cd8" />
<rect x="162" y="202" width="1" height="9" fill="#ea1212" />
<rect x="161" y="204" width="3" height="6" fill="#ea1212" />
<rect x="168" y="207" width="1" height="7" fill="#ea1212" />
<rect x="167" y="208" width="3" height="5" fill="#ea1212" />
<rect x="174" y="196" width="1" height="11" fill="#ea1212" />
<rect x="173" y="197" width="3" height="9" fill="#ea1212" />
<rect x="180" y="198" width="1" height="8" fill="#1a5cd8" />
<rect x="179" y="199" width="3" height="6" fill="#1a5cd8" />
<rect x="186" y="202" width="1" height="11" fill="#1a5cd8" />
<rect x="185" y="204" width="3" height="7" fill="#1a5cd8" />
<rect x="191" y="202" width="1" height="10" fill="#1a5cd8" />
<rect x="190" y="205" width="3" height="6" fill="#1a5cd8" />
<rect x="197" y="198" width="1" height="14" fill="#ea1212" />
<rect x="196" y="199" width="3" height="12" fill="#ea1212" />
<rect x="203" y="198" width="1" height="11" fill="#1a5cd8" />
<rect x="202" y="199" width="3" height="9" fill="#1a5cd8" />
<rect x="209" y="194" width="1" height="13" fill="#ea1212" />
<rect x="208" y="195" width="3" height="11" fill="#ea1212" />
<rect x="215" y="188" width="1" height="9" fill="#ea1212" />
<rect x="214" y="190" width="3" height="7" fill="#ea1212" />
<rect x="221" y="188" width="1" height="9" fill="#1a5cd8" />
<rect x="220" y="190" width="3" height="6" fill="#1a5cd8" />
<rect x="227" y="189" width="1" height="9" fill="#1a5cd8" />
<rect x="226" y="190" width="3" height="7" fill="#1a5cd8" />
<rect x="233" y="190" width="1" height="9" fill="#1a5cd8" />
<rect x="232" y="192" width="3" height="5" fill="#1a5cd8" />
<rect x="239" y="189" width="1" height="9" fill="#ea1212" />
<rect x="238" y="191" width="3" height="6" fill="#ea1212" />
<rect x="245" y="191" width="1" height="8" fill="#1a5cd8" />
<rect x="244" y="193" width="3" height="4" fill="#1a5cd8" />
<rect x="251" y="194" width="1" height="7" fill="#ea1212" />
<rect x="250" y="195" width="3" height="3" fill="#ea1212" />
<rect x="257" y="187" width="1" height="10" fill="#ea1212" />
<rect x="256" y="187" width="3" height="9" fill="#ea1212" />
<rect x="263" y="171" width="1" height="16" fill="#ea1212" />
<rect x="262" y="178" width="3" height="8" fill="#ea1212" />
<rect x="269" y="178" width="1" height="11" fill="#1a5cd8" />
<rect x="268" y="179" width="3" height="9" fill="#1a5cd8" />
<rect x="275" y="183" width="1" height="9" fill="#1a5cd8" />
<rect x="274" y="185" width="3" height="6" fill="#1a5cd8" />
<rect x="281" y="187" width="1" height="9" fill="#1a5cd8" />
<rect x="280" y="189" width="3" height="6" fill="#1a5cd8" />
<rect x="286" y="191" width="1" height="13" fill="#1a5cd8" />
<rect x="285" y="192" width="3" height="9" fill="#1a5cd8" />
<rect x="292" y="196" width="1" height="5" fill="#ea1212" />
<rect x="291" y="198" width="3" height="3" fill="#ea1212" />
<rect x="298" y="183" width="1" height="12" fill="#ea1212" />
<rect x="297" y="190" width="3" height="3" fill="#ea1212" />
<rect x="304" y="186" width="1" height="15" fill="#ea1212" />
<rect x="303" y="190" width="3" height="6" fill="#ea1212" />
<rect x="310" y="189" width="1" height="8" fill="#1a5cd8" />
<rect x="309" y="190" width="3" height="7" fill="#1a5cd8" />
<rect x="316" y="191" width="1" height="6" fill="#1a5cd8" />
<rect x="315" y="192" width="3" height="4" fill="#1a5cd8" />
<rect x="322" y="191" width="1" height="10" fill="#1a5cd8" />
<rect x="321" y="192" width="3" height="6" fill="#1a5cd8" />
<rect x="328" y="196" width="1" height="8" fill="#1a5cd8" />
<rect x="327" y="197" width="3" height="5" fill="#1a5cd8" />
<rect x="334" y="200" width="1" height="8" fill="#ea1212" />
<rect x="333" y="202" width="3" height="2" fill="#ea1212" />
<rect x="340" y="202" width="1" height="9" fill="#1a5cd8" />
<rect x="339" y="203" width="3" height="5" fill="#1a5cd8" />
<rect x="346" y="203" width="1" height="6" fill="#1a5cd8" />
<rect x="345" y="204" width="3" height="3" fill="#1a5cd8" />
<rect x="352" y="206" width="1" height="10" fill="#1a5cd8" />
<rect x="351" y="206" width="3" height="9" fill="#1a5cd8" />
<rect x="358" y="208" width="1" height="9" fill="#ea1212" />
<rect x="357" y="210" width="3" height="5" fill="#ea1212" />
<rect x="364" y="205" width="1" height="11" fill="#ea1212" />
<rect x="363" y="206" width="3" height="5" fill="#ea1212" />
<rect x="370" y="196" width="1" height="10" fill="#ea1212" />
<rect x="369" y="200" width="3" height="6" fill="#ea1212" />
<rect x="375" y="191" width="1" height="10" fill="#ea1212" />
<rect x="374" y="196" width="3" height="3" fill="#ea1212" />
<rect x="381" y="192" width="1" height="11" fill="#1a5cd8" />
<rect x="380" y="194" width="3" height="6" fill="#1a5cd8" />
<rect x="387" y="187" width="1" height="13" fill="#ea1212" />
<rect x="386" y="190" width="3" height="4" fill="#ea1212" />
<rect x="393" y="189" width="1" height="11" fill="#1a5cd8" />
<rect x="392" y="189" width="3" height="11" fill="#1a5cd8" />
<rect x="399" y="194" width="1" height="8" fill="#1a5cd8" />
<rect x="398" y="197" width="3" height="4" fill="#1a5cd8" />
<rect x="405" y="197" width="1" height="11" fill="#1a5cd8" />
<rect x="404" y="199" width="3" height="7" fill="#1a5cd8" />
<rect x="411" y="199" width="1" height="6" fill="#ea1212" />
<rect x="410" y="201" width="3" height="3" fill="#ea1212" />
<rect x="417" y="199" width="1" height="10" fill="#1a5cd8" />
<rect x="416" y="202" width="3" height="7" fill="#1a5cd8" />
<rect x="423" y="200" width="1" height="9" fill="#1a5cd8" />
<rect x="422" y="202" width="3" height="7" fill="#1a5cd8" />
<rect x="429" y="194" width="1" height="17" fill="#ea1212" />
<rect x="428" y="195" width="3" height="14" fill="#ea1212" />
<rect x="435" y="191" width="1" height="9" fill="#1a5cd8" />
<rect x="434" y="194" width="3" height="6" fill="#1a5cd8" />
<rect x="441" y="139" width="1" height="57" fill="#ea1212" />
<rect x="440" y="139" width="3" height="56" fill="#ea1212" />
<rect x="447" y="110" width="1" height="39" fill="#1a5cd8" />
<rect x="446" y="122" width="3" height="18" fill="#1a5cd8" />
<rect x="453" y="105" width="1" height="34" fill="#1a5cd8" />
<rect x="452" y="122" width="3" height="10" fill="#1a5cd8" />
<rect x="459" y="133" width="1" height="14" fill="#1a5cd8" />
<rect x="458" y="137" width="3" height="4" fill="#1a5cd8" />
<rect x="464" y="122" width="1" height="25" fill="#1a5cd8" />
<rect x="463" y="125" width="3" height="17" fill="#1a5cd8" />
<rect x="470" y="143" width="1" height="11" fill="#1a5cd8" />
<rect x="469" y="146" width="3" height="6" fill="#1a5cd8" />
<rect x="476" y="143" width="1" height="15" fill="#1a5cd8" />
<rect x="475" y="143" width="3" height="13" fill="#1a5cd8" />
<rect x="482" y="135" width="1" height="26" fill="#ea1212" />
<rect x="481" y="144" width="3" height="13" fill="#ea1212" />
<rect x="488" y="146" width="1" height="13" fill="#1a5cd8" />
<rect x="487" y="147" width="3" height="10" fill="#1a5cd8" />
<rect x="494" y="151" width="1" height="18" fill="#ea1212" />
<rect x="493" y="152" width="3" height="8" fill="#ea1212" />
<rect x="500" y="152" width="1" height="14" fill="#1a5cd8" />
<rect x="499" y="155" width="3" height="10" fill="#1a5cd8" />
<rect x="506" y="143" width="1" height="25" fill="#ea1212" />
<rect x="505" y="148" width="3" height="18" fill="#ea1212" />
<rect x="512" y="120" width="1" height="21" fill="#ea1212" />
<rect x="511" y="130" width="3" height="3" fill="#ea1212" />
<rect x="518" y="124" width="1" height="12" fill="#ea1212" />
<rect x="517" y="129" width="3" height="5" fill="#ea1212" />
<rect x="524" y="118" width="1" height="17" fill="#1a5cd8" />
<rect x="523" y="124" width="3" height="7" fill="#1a5cd8" />
<rect x="530" y="111" width="1" height="30" fill="#ea1212" />
<rect x="529" y="113" width="3" height="18" fill="#ea1212" />
<rect x="536" y="113" width="1" height="19" fill="#ea1212" />
<rect x="535" y="122" width="3" height="3" fill="#ea1212" />
<rect x="542" y="108" width="1" height="19" fill="#1a5cd8" />
<rect x="541" y="115" width="3" height="10" fill="#1a5cd8" />
<rect x="548" y="103" width="1" height="30" fill="#ea1212" />
<rect x="547" y="126" width="3" height="6" fill="#ea1212" />
<rect x="554" y="121" width="1" height="13" fill="#1a5cd8" />
<rect x="553" y="128" width="3" height="5" fill="#1a5cd8" />
<rect x="559" y="128" width="1" height="16" fill="#ea1212" />
<rect x="558" y="133" width="3" height="3" fill="#ea1212" />
<rect x="565" y="126" width="1" height="14" fill="#ea1212" />
<rect x="564" y="130" width="3" height="4" fill="#ea1212" />
<rect x="571" y="126" width="1" height="15" fill="#1a5cd8" />
<rect x="570" y="131" width="3" height="9" fill="#1a5cd8" />
<rect x="577" y="133" width="1" height="10" fill="#1a5cd8" />
<rect x="576" y="137" width="3" height="4" fill="#1a5cd8" />
<rect x="583" y="138" width="1" height="13" fill="#1a5cd8" />
<rect x="582" y="140" width="3" height="5" fill="#1a5cd8" />
<rect x="589" y="134" width="1" height="18" fill="#1a5cd8" />
<rect x="588" y="148" width="3" height="2" fill="#1a5cd8" />
<rect x="595" y="140" width="1" height="12" fill="#1a5cd8" />
<rect x="594" y="146" width="3" height="5" fill="#1a5cd8" />
<rect x="601" y="141" width="1" height="11" fill="#ea1212" />
<rect x="600" y="143" width="3" height="8" fill="#ea1212" />
<rect x="607" y="144" width="1" height="12" fill="#1a5cd8" />
<rect x="606" y="146" width="3" height="8" fill="#1a5cd8" />
<rect x="613" y="149" width="1" height="12" fill="#1a5cd8" />
<rect x="612" y="150" width="3" height="10" fill="#1a5cd8" />
<rect x="619" y="146" width="1" height="13" fill="#ea1212" />
<rect x="618" y="148" width="3" height="10" fill="#ea1212" />
<rect x="625" y="149" width="1" height="13" fill="#1a5cd8" />
<rect x="624" y="150" width="3" height="11" fill="#1a5cd8" />
<rect x="631" y="165" width="1" height="38" fill="#1a5cd8" />
<rect x="630" y="167" width="3" height="22" fill="#1a5cd8" />
<rect x="637" y="169" width="1" height="20" fill="#ea1212" />
<rect x="636" y="171" width="3" height="17" fill="#ea1212" />
<rect x="643" y="148" width="1" height="24" fill="#ea1212" />
<rect x="642" y="149" width="3" height="23" fill="#ea1212" />
<rect x="648" y="144" width="1" height="14" fill="#ea1212" />
<rect x="647" y="149" width="3" height="5" fill="#ea1212" />
<rect x="654" y="142" width="1" height="10" fill="#1a5cd8" />
<rect x="653" y="143" width="3" height="5" fill="#1a5cd8" />
<rect x="660" y="133" width="1" height="15" fill="#ea1212" />
<rect x="659" y="138" width="3" height="6" fill="#ea1212" />
<rect x="666" y="135" width="1" height="12" fill="#1a5cd8" />
<rect x="665" y="137" width="3" height="7" fill="#1a5cd8" />
<rect x="672" y="135" width="1" height="15" fill="#1a5cd8" />
<rect x="671" y="138" width="3" height="11" fill="#1a5cd8" />
<rect x="678" y="135" width="1" height="13" fill="#ea1212" />
<rect x="677" y="137" width="3" height="7" fill="#ea1212" />
<rect x="684" y="127" width="1" height="12" fill="#1a5cd8" />
<rect x="683" y="134" width="3" height="4" fill="#1a5cd8" />
<rect x="690" y="120" width="1" height="18" fill="#ea1212" />
<rect x="689" y="127" width="3" height="8" fill="#ea1212" />
<rect x="696" y="117" width="1" height="21" fill="#1a5cd8" />
<rect x="695" y="123" width="3" height="14" fill="#1a5cd8" />
<rect x="702" y="126" width="1" height="10" fill="#1a5cd8" />
<rect x="701" y="129" width="3" height="5" fill="#1a5cd8" />
<rect x="708" y="117" width="1" height="18" fill="#ea1212" />
<rect x="707" y="124" width="3" height="9" fill="#ea1212" />
<rect x="714" y="62" width="1" height="54" fill="#ea1212" />
<rect x="713" y="76" width="3" height="35" fill="#ea1212" />
<rect x="720" y="72" width="1" height="17" fill="#1a5cd8" />
<rect x="719" y="78" width="3" height="8" fill="#1a5cd8" />
<rect x="726" y="68" width="1" height="30" fill="#ea1212" />
<rect x="725" y="83" width="3" height="6" fill="#ea1212" />
<rect x="732" y="70" width="1" height="21" fill="#1a5cd8" />
<rect x="731" y="78" width="3" height="12" fill="#1a5cd8" />
<rect x="738" y="82" width="1" height="13" fill="#ea1212" />
<rect x="737" y="85" width="3" height="4" fill="#ea1212" />
<polygon points="17,225 23,220 23,230" fill="#0000f0" shape-rendering="auto"/>
<rect x="23" y="225" width="9" height="1" fill="#0000f0" />
<text x="31.5" y="229" fill="#0000f0" font-size="14" text-anchor="start" textLength="21.5" lengthAdjust="spacingAndGlyphs" ><tspan font-size="12" baseline-shift="1" stroke="#0000f0" stroke-width="0.15">최저</tspan></text>
<text x="60.5" y="229" fill="#0000f0" font-size="14" text-anchor="start" textLength="33" lengthAdjust="spacingAndGlyphs" >12,460</text>
<text x="97.5" y="229" fill="#0000f0" font-size="14" text-anchor="start" textLength="38.5" lengthAdjust="spacingAndGlyphs" >(03/05)</text>
<text x="587.5" y="70.5" fill="#f00000" font-size="14" text-anchor="start" textLength="22.5" lengthAdjust="spacingAndGlyphs" ><tspan font-size="12" baseline-shift="1" stroke="#f00000" stroke-width="0.15">최고</tspan></text>
<text x="615.5" y="70.5" fill="#f00000" font-size="14" text-anchor="start" textLength="34" lengthAdjust="spacingAndGlyphs" >25,550</text>
<text x="652.5" y="70.5" fill="#f00000" font-size="14" text-anchor="start" textLength="39" lengthAdjust="spacingAndGlyphs" >(08/26)</text>
<rect x="698" y="66" width="10" height="1" fill="#f00000" />
<polygon points="713.5,66 707,61.5 707,70.5" fill="#f00000" shape-rendering="auto"/>
<rect x="774" y="50" width="3" height="1" fill="#707070" />
<rect x="774" y="56" width="3" height="1" fill="#707070" />
<rect x="774" y="62" width="3" height="1" fill="#707070" />
<rect x="774" y="69" width="6" height="1" fill="#707070" />
<rect x="774" y="75" width="3" height="1" fill="#707070" />
<rect x="774" y="81" width="3" height="1" fill="#707070" />
<rect x="774" y="88" width="3" height="1" fill="#707070" />
<rect x="774" y="94" width="3" height="1" fill="#707070" />
<rect x="774" y="100" width="6" height="1" fill="#707070" />
<rect x="774" y="107" width="3" height="1" fill="#707070" />
<rect x="774" y="113" width="3" height="1" fill="#707070" />
<rect x="774" y="119" width="3" height="1" fill="#707070" />
<rect x="774" y="126" width="3" height="1" fill="#707070" />
<rect x="774" y="132" width="6" height="1" fill="#707070" />
<rect x="774" y="138" width="3" height="1" fill="#707070" />
<rect x="774" y="145" width="3" height="1" fill="#707070" />
<rect x="774" y="151" width="3" height="1" fill="#707070" />
<rect x="774" y="157" width="3" height="1" fill="#707070" />
<rect x="774" y="164" width="6" height="1" fill="#707070" />
<rect x="774" y="170" width="3" height="1" fill="#707070" />
<rect x="774" y="176" width="3" height="1" fill="#707070" />
<rect x="774" y="183" width="3" height="1" fill="#707070" />
<rect x="774" y="189" width="3" height="1" fill="#707070" />
<rect x="774" y="195" width="6" height="1" fill="#707070" />
<rect x="774" y="202" width="3" height="1" fill="#707070" />
<rect x="774" y="208" width="3" height="1" fill="#707070" />
<rect x="774" y="214" width="3" height="1" fill="#707070" />
<rect x="774" y="221" width="3" height="1" fill="#707070" />
<rect x="774" y="227" width="6" height="1" fill="#707070" />
<rect x="774" y="233" width="3" height="1" fill="#707070" />
<rect x="774" y="240" width="3" height="1" fill="#707070" />
<rect x="774" y="246" width="3" height="1" fill="#707070" />
<rect x="774" y="252" width="3" height="1" fill="#707070" />
<text x="782" y="136" fill="#383838" font-size="14" text-anchor="start" textLength="33.5" lengthAdjust="spacingAndGlyphs" >20,000</text>
<text x="782" y="168" fill="#383838" font-size="14" text-anchor="start" textLength="33.5" lengthAdjust="spacingAndGlyphs" >17,500</text>
<text x="782" y="199" fill="#383838" font-size="14" text-anchor="start" textLength="33.5" lengthAdjust="spacingAndGlyphs" >15,000</text>
<text x="782" y="231" fill="#383838" font-size="14" text-anchor="start" textLength="33.5" lengthAdjust="spacingAndGlyphs" >12,500</text>
<text x="775" y="60" fill="#e81010" font-size="14" text-anchor="start" textLength="46" lengthAdjust="spacingAndGlyphs" >LC:89,81</text>
<text x="775" y="71.5" fill="#1f5ad8" font-size="14" text-anchor="start" textLength="46" lengthAdjust="spacingAndGlyphs" >HC:-7,44</text>
<rect x="778" y="79" width="58" height="13" fill="#e41a14" />
<text x="781.5" y="90.5" fill="#ffffff" font-size="14" text-anchor="start" textLength="34" lengthAdjust="spacingAndGlyphs" >23,650</text>
<text x="781.5" y="102" fill="#e81010" font-size="14" text-anchor="start" textLength="29" lengthAdjust="spacingAndGlyphs" >0,85%</text>
<rect x="782" y="104" width="4" height="1" fill="#505050" />
<rect x="787" y="104" width="4" height="1" fill="#505050" />
<rect x="795" y="104" width="4" height="1" fill="#505050" />
<rect x="800" y="104" width="4" height="1" fill="#505050" />
<rect x="806" y="104" width="4" height="1" fill="#505050" />
<rect x="9" y="260" width="5" height="6" fill="#7c7c7c" />
<rect x="10" y="261" width="3" height="4" fill="#c4c4c4" />
<text x="19.5" y="267" fill="#2a9a9a" font-size="14" text-anchor="start" textLength="36" lengthAdjust="spacingAndGlyphs" ><tspan font-size="12" baseline-shift="1" stroke="#2a9a9a" stroke-width="0.15">거래량</tspan></text>
<text x="64" y="267" fill="#e020d0" font-size="14" text-anchor="start" textLength="22.5" lengthAdjust="spacingAndGlyphs" ><tspan font-size="12" baseline-shift="1" stroke="#e020d0" stroke-width="0.15">단순</tspan></text>
<text x="91" y="267" fill="#e020d0" font-size="14" text-anchor="start" textLength="6.5" lengthAdjust="spacingAndGlyphs" >5</text>
<text x="107" y="267" fill="#f0a000" font-size="14" text-anchor="start" textLength="11" lengthAdjust="spacingAndGlyphs" >20</text>
<text x="126" y="267" fill="#20a040" font-size="14" text-anchor="start" textLength="12" lengthAdjust="spacingAndGlyphs" >60</text>
<text x="148" y="267" fill="#707070" font-size="14" text-anchor="start" textLength="16" lengthAdjust="spacingAndGlyphs" >120</text>
<text x="10.5" y="280" fill="#383838" font-size="14" text-anchor="start" textLength="37.5" lengthAdjust="spacingAndGlyphs" >899,104</text>
<text x="48.5" y="280" fill="#383838" font-size="14" text-anchor="start" textLength="11.5" lengthAdjust="spacingAndGlyphs" ><tspan font-size="12" baseline-shift="1" stroke="#383838" stroke-width="0.15">주</tspan></text>
<text x="60.5" y="280" fill="#383838" font-size="14" text-anchor="start" textLength="49" lengthAdjust="spacingAndGlyphs" >(56,86%)</text>
<rect x="7" y="327" width="3" height="2" fill="#ea1212" />
<rect x="12" y="326" width="3" height="3" fill="#ea1212" />
<rect x="18" y="322" width="3" height="7" fill="#ea1212" />
<rect x="24" y="325" width="3" height="4" fill="#1a5cd8" />
<rect x="30" y="323" width="3" height="6" fill="#ea1212" />
<rect x="36" y="308" width="3" height="21" fill="#ea1212" />
<rect x="42" y="294" width="3" height="35" fill="#ea1212" />
<rect x="48" y="314" width="3" height="15" fill="#1a5cd8" />
<rect x="54" y="325" width="3" height="4" fill="#1a5cd8" />
<rect x="60" y="297" width="3" height="32" fill="#ea1212" />
<rect x="66" y="322" width="3" height="7" fill="#1a5cd8" />
<rect x="72" y="322" width="3" height="7" fill="#1a5cd8" />
<rect x="78" y="326" width="3" height="3" fill="#1a5cd8" />
<rect x="84" y="322" width="3" height="7" fill="#ea1212" />
<rect x="90" y="319" width="3" height="10" fill="#ea1212" />
<rect x="96" y="326" width="3" height="3" fill="#1a5cd8" />
<rect x="101" y="323" width="3" height="6" fill="#ea1212" />
<rect x="107" y="326" width="3" height="3" fill="#1a5cd8" />
<rect x="113" y="326" width="3" height="3" fill="#ea1212" />
<rect x="119" y="326" width="3" height="3" fill="#1a5cd8" />
<rect x="125" y="326" width="3" height="3" fill="#ea1212" />
<rect x="131" y="326" width="3" height="3" fill="#1a5cd8" />
<rect x="137" y="326" width="3" height="3" fill="#1a5cd8" />
<rect x="143" y="326" width="3" height="3" fill="#1a5cd8" />
<rect x="149" y="326" width="3" height="3" fill="#ea1212" />
<rect x="155" y="326" width="3" height="3" fill="#1a5cd8" />
<rect x="161" y="326" width="3" height="3" fill="#ea1212" />
<rect x="167" y="326" width="3" height="3" fill="#ea1212" />
<rect x="173" y="326" width="3" height="3" fill="#ea1212" />
<rect x="179" y="326" width="3" height="3" fill="#1a5cd8" />
<rect x="185" y="326" width="3" height="3" fill="#1a5cd8" />
<rect x="190" y="326" width="3" height="3" fill="#1a5cd8" />
<rect x="196" y="326" width="3" height="3" fill="#ea1212" />
<rect x="202" y="326" width="3" height="3" fill="#1a5cd8" />
<rect x="208" y="326" width="3" height="3" fill="#ea1212" />
<rect x="214" y="326" width="3" height="3" fill="#ea1212" />
<rect x="220" y="326" width="3" height="3" fill="#1a5cd8" />
<rect x="226" y="326" width="3" height="3" fill="#1a5cd8" />
<rect x="232" y="326" width="3" height="3" fill="#1a5cd8" />
<rect x="238" y="326" width="3" height="3" fill="#ea1212" />
<rect x="244" y="326" width="3" height="3" fill="#1a5cd8" />
<rect x="250" y="326" width="3" height="3" fill="#ea1212" />
<rect x="256" y="326" width="3" height="3" fill="#ea1212" />
<rect x="262" y="326" width="3" height="3" fill="#ea1212" />
<rect x="268" y="326" width="3" height="3" fill="#1a5cd8" />
<rect x="274" y="326" width="3" height="3" fill="#1a5cd8" />
<rect x="280" y="326" width="3" height="3" fill="#1a5cd8" />
<rect x="285" y="326" width="3" height="3" fill="#1a5cd8" />
<rect x="291" y="326" width="3" height="3" fill="#ea1212" />
<rect x="297" y="326" width="3" height="3" fill="#ea1212" />
<rect x="303" y="326" width="3" height="3" fill="#ea1212" />
<rect x="309" y="326" width="3" height="3" fill="#1a5cd8" />
<rect x="315" y="326" width="3" height="3" fill="#1a5cd8" />
<rect x="321" y="326" width="3" height="3" fill="#1a5cd8" />
<rect x="327" y="326" width="3" height="3" fill="#1a5cd8" />
<rect x="333" y="326" width="3" height="3" fill="#ea1212" />
<rect x="339" y="326" width="3" height="3" fill="#1a5cd8" />
<rect x="345" y="326" width="3" height="3" fill="#1a5cd8" />
<rect x="351" y="326" width="3" height="3" fill="#1a5cd8" />
<rect x="357" y="326" width="3" height="3" fill="#ea1212" />
<rect x="363" y="326" width="3" height="3" fill="#ea1212" />
<rect x="369" y="326" width="3" height="3" fill="#ea1212" />
<rect x="374" y="326" width="3" height="3" fill="#ea1212" />
<rect x="380" y="326" width="3" height="3" fill="#1a5cd8" />
<rect x="386" y="326" width="3" height="3" fill="#ea1212" />
<rect x="392" y="326" width="3" height="3" fill="#1a5cd8" />
<rect x="398" y="326" width="3" height="3" fill="#1a5cd8" />
<rect x="404" y="326" width="3" height="3" fill="#1a5cd8" />
<rect x="410" y="326" width="3" height="3" fill="#ea1212" />
<rect x="416" y="326" width="3" height="3" fill="#1a5cd8" />
<rect x="422" y="326" width="3" height="3" fill="#1a5cd8" />
<rect x="428" y="326" width="3" height="3" fill="#ea1212" />
<rect x="434" y="326" width="3" height="3" fill="#1a5cd8" />
<rect x="440" y="308" width="3" height="21" fill="#ea1212" />
<rect x="446" y="267" width="3" height="62" fill="#ea1212" />
<rect x="452" y="281" width="3" height="48" fill="#1a5cd8" />
<rect x="458" y="312" width="3" height="17" fill="#1a5cd8" />
<rect x="463" y="313" width="3" height="16" fill="#1a5cd8" />
<rect x="469" y="320" width="3" height="9" fill="#1a5cd8" />
<rect x="475" y="320" width="3" height="9" fill="#1a5cd8" />
<rect x="481" y="304" width="3" height="25" fill="#ea1212" />
<rect x="487" y="322" width="3" height="7" fill="#1a5cd8" />
<rect x="493" y="320" width="3" height="9" fill="#ea1212" />
<rect x="499" y="325" width="3" height="4" fill="#1a5cd8" />
<rect x="505" y="318" width="3" height="11" fill="#ea1212" />
<rect x="511" y="306" width="3" height="23" fill="#ea1212" />
<rect x="517" y="319" width="3" height="10" fill="#1a5cd8" />
<rect x="523" y="316" width="3" height="13" fill="#ea1212" />
<rect x="529" y="319" width="3" height="10" fill="#1a5cd8" />
<rect x="535" y="318" width="3" height="11" fill="#ea1212" />
<rect x="541" y="317" width="3" height="12" fill="#ea1212" />
<rect x="547" y="308" width="3" height="21" fill="#ea1212" />
<rect x="553" y="324" width="3" height="5" fill="#1a5cd8" />
<rect x="558" y="324" width="3" height="5" fill="#1a5cd8" />
<rect x="564" y="324" width="3" height="5" fill="#1a5cd8" />
<rect x="570" y="324" width="3" height="5" fill="#1a5cd8" />
<rect x="576" y="325" width="3" height="4" fill="#1a5cd8" />
<rect x="582" y="325" width="3" height="4" fill="#1a5cd8" />
<rect x="588" y="325" width="3" height="4" fill="#ea1212" />
<rect x="594" y="326" width="3" height="3" fill="#1a5cd8" />
<rect x="600" y="326" width="3" height="3" fill="#1a5cd8" />
<rect x="606" y="326" width="3" height="3" fill="#ea1212" />
<rect x="612" y="326" width="3" height="3" fill="#1a5cd8" />
<rect x="618" y="327" width="3" height="2" fill="#1a5cd8" />
<rect x="624" y="325" width="3" height="4" fill="#ea1212" />
<rect x="630" y="324" width="3" height="5" fill="#ea1212" />
<rect x="636" y="324" width="3" height="5" fill="#1a5cd8" />
<rect x="642" y="324" width="3" height="5" fill="#ea1212" />
<rect x="647" y="325" width="3" height="4" fill="#1a5cd8" />
<rect x="653" y="326" width="3" height="3" fill="#1a5cd8" />
<rect x="659" y="326" width="3" height="3" fill="#ea1212" />
<rect x="665" y="326" width="3" height="3" fill="#1a5cd8" />
<rect x="671" y="326" width="3" height="3" fill="#1a5cd8" />
<rect x="677" y="326" width="3" height="3" fill="#ea1212" />
<rect x="683" y="324" width="3" height="5" fill="#ea1212" />
<rect x="689" y="322" width="3" height="7" fill="#ea1212" />
<rect x="695" y="326" width="3" height="3" fill="#1a5cd8" />
<rect x="701" y="326" width="3" height="3" fill="#1a5cd8" />
<rect x="707" y="326" width="3" height="3" fill="#ea1212" />
<rect x="713" y="280" width="3" height="49" fill="#ea1212" />
<rect x="719" y="319" width="3" height="10" fill="#1a5cd8" />
<rect x="725" y="312" width="3" height="17" fill="#ea1212" />
<rect x="731" y="320" width="3" height="9" fill="#1a5cd8" />
<rect x="737" y="323" width="3" height="6" fill="#1a5cd8" />
<g shape-rendering="crispEdges">
<polyline points="8.0,327.5 30.0,327.0 33.5,325.5 70.0,324.6 130.0,324.5 250.0,324.4 380.0,324.4 430.0,324.8 441.0,324.0 477.0,324.1 506.0,323.3 524.0,322.3 572.0,321.8 680.0,321.5 714.0,321.0 738.0,319.3" fill="none" stroke="#209040" stroke-width="1.6" stroke-linejoin="round" />
<polyline points="8.0,326.4 57.0,326.4 130.0,326.0 430.0,325.5 500.0,324.9 600.0,324.5 690.0,322.5 738.0,322.0" fill="none" stroke="#808080" stroke-width="1" stroke-linejoin="round" />
<polyline points="8.0,327.7 27.0,327.7 39.6,324.2 45.8,323.3 57.0,322.4 70.0,321.0 74.0,321.0 91.0,320.3 118.0,319.2 148.0,319.0 155.0,320.4 162.0,322.0 168.0,323.5 178.0,323.5 200.0,327.0 430.0,327.5 441.0,325.0 450.0,322.0 458.0,320.0 465.0,319.5 477.0,318.0 489.0,317.2 500.0,316.4 512.0,314.8 524.0,314.0 536.0,313.3 548.0,312.5 560.0,312.5 566.0,315.6 578.0,318.7 590.0,319.5 600.0,320.0 610.0,321.0 640.0,322.7 708.0,323.5 714.0,323.2 738.0,321.8" fill="none" stroke="#f0a000" stroke-width="1" stroke-linejoin="round" />
<polyline points="28.0,326.0 37.0,321.0 43.0,314.5 49.0,313.2 55.4,312.3 61.6,307.4 70.0,313.2 73.4,316.0 79.0,318.5 85.0,317.7 91.0,320.8 103.0,322.3 115.0,323.1 121.0,323.0 160.0,326.0 200.0,326.3 260.0,326.3 300.0,326.5 380.0,326.5 436.0,326.5 441.0,322.0 447.0,311.0 453.0,301.0 459.0,298.0 465.0,296.3 471.0,298.6 477.0,309.0 483.0,314.8 491.0,316.5 500.0,317.6 512.0,316.8 524.0,316.0 530.0,315.3 542.0,317.2 548.0,316.4 560.0,318.7 572.0,321.0 578.0,324.0 595.0,325.0 610.0,326.0 640.0,325.0 680.0,325.0 708.0,325.0 714.0,319.7 718.0,315.5 726.0,312.0 732.0,310.1 738.0,310.1" fill="none" stroke="#e020d0" stroke-width="1" stroke-linejoin="round" />
</g>
<rect x="774" y="268" width="6" height="1" fill="#707070" />
<rect x="774" y="280" width="3" height="1" fill="#707070" />
<rect x="774" y="292" width="3" height="1" fill="#707070" />
<rect x="774" y="304" width="3" height="1" fill="#707070" />
<rect x="774" y="316" width="3" height="1" fill="#707070" />
<rect x="774" y="328" width="6" height="1" fill="#707070" />
<text x="782" y="272" fill="#383838" font-size="14" text-anchor="start" textLength="41" lengthAdjust="spacingAndGlyphs" >10,000K</text>
<rect x="778" y="304" width="58" height="13" fill="#1a52c8" />
<text x="782" y="315.5" fill="#ffffff" font-size="14" text-anchor="start" textLength="39" lengthAdjust="spacingAndGlyphs" >899,104</text>
<text x="782" y="327" fill="#2060e0" font-size="14" text-anchor="start" textLength="36" lengthAdjust="spacingAndGlyphs" >56,86%</text>
<rect x="828" y="257" width="8" height="7" fill="#404040" />
<path d="M829.5,258.5 L834.5,262.5 M834.5,258.5 L829.5,262.5" stroke="#fff" stroke-width="1" shape-rendering="auto"/>
<rect x="9" y="336" width="5" height="6" fill="#7c7c7c" />
<rect x="10" y="337" width="3" height="4" fill="#c4c4c4" />
<text x="21" y="344.5" fill="#5a5a9c" font-size="14" text-anchor="start" textLength="46" lengthAdjust="spacingAndGlyphs" ><tspan font-size="12" baseline-shift="1" stroke="#5a5a9c" stroke-width="0.15">거래대금</tspan></text>
<rect x="7" y="484" width="3" height="2" fill="#5b5b9b" />
<rect x="12" y="483" width="3" height="3" fill="#5b5b9b" />
<rect x="18" y="475" width="3" height="11" fill="#5b5b9b" />
<rect x="24" y="480" width="3" height="6" fill="#5b5b9b" />
<rect x="30" y="476" width="3" height="10" fill="#5b5b9b" />
<rect x="36" y="447" width="3" height="39" fill="#5b5b9b" />
<rect x="42" y="420" width="3" height="66" fill="#5b5b9b" />
<rect x="48" y="459" width="3" height="27" fill="#5b5b9b" />
<rect x="54" y="476" width="3" height="10" fill="#5b5b9b" />
<rect x="60" y="421" width="3" height="65" fill="#5b5b9b" />
<rect x="66" y="474" width="3" height="12" fill="#5b5b9b" />
<rect x="72" y="474" width="3" height="12" fill="#5b5b9b" />
<rect x="78" y="478" width="3" height="8" fill="#5b5b9b" />
<rect x="84" y="473" width="3" height="13" fill="#5b5b9b" />
<rect x="90" y="466" width="3" height="20" fill="#5b5b9b" />
<rect x="96" y="476" width="3" height="10" fill="#5b5b9b" />
<rect x="101" y="475" width="3" height="11" fill="#5b5b9b" />
<rect x="107" y="480" width="3" height="6" fill="#5b5b9b" />
<rect x="113" y="478" width="3" height="8" fill="#5b5b9b" />
<rect x="119" y="482" width="3" height="4" fill="#5b5b9b" />
<rect x="125" y="478" width="3" height="8" fill="#5b5b9b" />
<rect x="131" y="477" width="3" height="9" fill="#5b5b9b" />
<rect x="137" y="481" width="3" height="5" fill="#5b5b9b" />
<rect x="143" y="481" width="3" height="5" fill="#5b5b9b" />
<rect x="149" y="480" width="3" height="6" fill="#5b5b9b" />
<rect x="155" y="482" width="3" height="4" fill="#5b5b9b" />
<rect x="161" y="483" width="3" height="3" fill="#5b5b9b" />
<rect x="167" y="484" width="3" height="2" fill="#5b5b9b" />
<rect x="173" y="482" width="3" height="4" fill="#5b5b9b" />
<rect x="179" y="484" width="3" height="2" fill="#5b5b9b" />
<rect x="185" y="483" width="3" height="3" fill="#5b5b9b" />
<rect x="190" y="483" width="3" height="3" fill="#5b5b9b" />
<rect x="196" y="482" width="3" height="4" fill="#5b5b9b" />
<rect x="202" y="483" width="3" height="3" fill="#5b5b9b" />
<rect x="208" y="481" width="3" height="5" fill="#5b5b9b" />
<rect x="214" y="482" width="3" height="4" fill="#5b5b9b" />
<rect x="220" y="483" width="3" height="3" fill="#5b5b9b" />
<rect x="226" y="483" width="3" height="3" fill="#5b5b9b" />
<rect x="232" y="484" width="3" height="2" fill="#5b5b9b" />
<rect x="238" y="484" width="3" height="2" fill="#5b5b9b" />
<rect x="244" y="484" width="3" height="2" fill="#5b5b9b" />
<rect x="250" y="484" width="3" height="2" fill="#5b5b9b" />
<rect x="256" y="482" width="3" height="4" fill="#5b5b9b" />
<rect x="262" y="477" width="3" height="9" fill="#5b5b9b" />
<rect x="268" y="483" width="3" height="3" fill="#5b5b9b" />
<rect x="274" y="483" width="3" height="3" fill="#5b5b9b" />
<rect x="280" y="484" width="3" height="2" fill="#5b5b9b" />
<rect x="285" y="481" width="3" height="5" fill="#5b5b9b" />
<rect x="291" y="484" width="3" height="2" fill="#5b5b9b" />
<rect x="297" y="481" width="3" height="5" fill="#5b5b9b" />
<rect x="303" y="482" width="3" height="4" fill="#5b5b9b" />
<rect x="309" y="484" width="3" height="2" fill="#5b5b9b" />
<rect x="315" y="484" width="3" height="2" fill="#5b5b9b" />
<rect x="321" y="484" width="3" height="2" fill="#5b5b9b" />
<rect x="327" y="484" width="3" height="2" fill="#5b5b9b" />
<rect x="333" y="483" width="3" height="3" fill="#5b5b9b" />
<rect x="339" y="483" width="3" height="3" fill="#5b5b9b" />
<rect x="345" y="484" width="3" height="2" fill="#5b5b9b" />
<rect x="351" y="483" width="3" height="3" fill="#5b5b9b" />
<rect x="357" y="484" width="3" height="2" fill="#5b5b9b" />
<rect x="363" y="484" width="3" height="2" fill="#5b5b9b" />
<rect x="369" y="482" width="3" height="4" fill="#5b5b9b" />
<rect x="374" y="480" width="3" height="6" fill="#5b5b9b" />
<rect x="380" y="483" width="3" height="3" fill="#5b5b9b" />
<rect x="386" y="479" width="3" height="7" fill="#5b5b9b" />
<rect x="392" y="482" width="3" height="4" fill="#5b5b9b" />
<rect x="398" y="483" width="3" height="3" fill="#5b5b9b" />
<rect x="404" y="483" width="3" height="3" fill="#5b5b9b" />
<rect x="410" y="484" width="3" height="2" fill="#5b5b9b" />
<rect x="416" y="483" width="3" height="3" fill="#5b5b9b" />
<rect x="422" y="484" width="3" height="2" fill="#5b5b9b" />
<rect x="428" y="483" width="3" height="3" fill="#5b5b9b" />
<rect x="434" y="483" width="3" height="3" fill="#5b5b9b" />
<rect x="440" y="445" width="3" height="41" fill="#5b5b9b" />
<rect x="446" y="345" width="3" height="141" fill="#5b5b9b" />
<rect x="452" y="375" width="3" height="111" fill="#5b5b9b" />
<rect x="458" y="450" width="3" height="36" fill="#5b5b9b" />
<rect x="463" y="450" width="3" height="36" fill="#5b5b9b" />
<rect x="469" y="465" width="3" height="21" fill="#5b5b9b" />
<rect x="475" y="468" width="3" height="18" fill="#5b5b9b" />
<rect x="481" y="434" width="3" height="52" fill="#5b5b9b" />
<rect x="487" y="472" width="3" height="14" fill="#5b5b9b" />
<rect x="493" y="469" width="3" height="17" fill="#5b5b9b" />
<rect x="499" y="475" width="3" height="11" fill="#5b5b9b" />
<rect x="505" y="459" width="3" height="27" fill="#5b5b9b" />
<rect x="511" y="434" width="3" height="52" fill="#5b5b9b" />
<rect x="517" y="465" width="3" height="21" fill="#5b5b9b" />
<rect x="523" y="460" width="3" height="26" fill="#5b5b9b" />
<rect x="529" y="464" width="3" height="22" fill="#5b5b9b" />
<rect x="535" y="462" width="3" height="24" fill="#5b5b9b" />
<rect x="541" y="460" width="3" height="26" fill="#5b5b9b" />
<rect x="547" y="436" width="3" height="50" fill="#5b5b9b" />
<rect x="553" y="471" width="3" height="15" fill="#5b5b9b" />
<rect x="558" y="474" width="3" height="12" fill="#5b5b9b" />
<rect x="564" y="476" width="3" height="10" fill="#5b5b9b" />
<rect x="570" y="477" width="3" height="9" fill="#5b5b9b" />
<rect x="576" y="478" width="3" height="8" fill="#5b5b9b" />
<rect x="582" y="478" width="3" height="8" fill="#5b5b9b" />
<rect x="588" y="476" width="3" height="10" fill="#5b5b9b" />
<rect x="594" y="480" width="3" height="6" fill="#5b5b9b" />
<rect x="600" y="481" width="3" height="5" fill="#5b5b9b" />
<rect x="606" y="480" width="3" height="6" fill="#5b5b9b" />
<rect x="612" y="480" width="3" height="6" fill="#5b5b9b" />
<rect x="618" y="480" width="3" height="6" fill="#5b5b9b" />
<rect x="624" y="480" width="3" height="6" fill="#5b5b9b" />
<rect x="630" y="475" width="3" height="11" fill="#5b5b9b" />
<rect x="636" y="478" width="3" height="8" fill="#5b5b9b" />
<rect x="642" y="477" width="3" height="9" fill="#5b5b9b" />
<rect x="647" y="479" width="3" height="7" fill="#5b5b9b" />
<rect x="653" y="481" width="3" height="5" fill="#5b5b9b" />
<rect x="659" y="476" width="3" height="10" fill="#5b5b9b" />
<rect x="665" y="480" width="3" height="6" fill="#5b5b9b" />
<rect x="671" y="481" width="3" height="5" fill="#5b5b9b" />
<rect x="677" y="479" width="3" height="7" fill="#5b5b9b" />
<rect x="683" y="476" width="3" height="10" fill="#5b5b9b" />
<rect x="689" y="471" width="3" height="15" fill="#5b5b9b" />
<rect x="695" y="476" width="3" height="10" fill="#5b5b9b" />
<rect x="701" y="477" width="3" height="9" fill="#5b5b9b" />
<rect x="707" y="475" width="3" height="11" fill="#5b5b9b" />
<rect x="713" y="354" width="3" height="132" fill="#5b5b9b" />
<rect x="719" y="459" width="3" height="27" fill="#5b5b9b" />
<rect x="725" y="437" width="3" height="49" fill="#5b5b9b" />
<rect x="731" y="459" width="3" height="27" fill="#5b5b9b" />
<rect x="737" y="471" width="3" height="15" fill="#5b5b9b" />
<rect x="774" y="485" width="6" height="1" fill="#707070" />
<rect x="774" y="478" width="3" height="1" fill="#707070" />
<rect x="774" y="472" width="3" height="1" fill="#707070" />
<rect x="774" y="465" width="3" height="1" fill="#707070" />
<rect x="774" y="458" width="3" height="1" fill="#707070" />
<rect x="774" y="451" width="6" height="1" fill="#707070" />
<rect x="774" y="445" width="3" height="1" fill="#707070" />
<rect x="774" y="438" width="3" height="1" fill="#707070" />
<rect x="774" y="431" width="3" height="1" fill="#707070" />
<rect x="774" y="424" width="3" height="1" fill="#707070" />
<rect x="774" y="418" width="6" height="1" fill="#707070" />
<rect x="774" y="411" width="3" height="1" fill="#707070" />
<rect x="774" y="404" width="3" height="1" fill="#707070" />
<rect x="774" y="397" width="3" height="1" fill="#707070" />
<rect x="774" y="391" width="3" height="1" fill="#707070" />
<rect x="774" y="384" width="6" height="1" fill="#707070" />
<rect x="774" y="377" width="3" height="1" fill="#707070" />
<rect x="774" y="371" width="3" height="1" fill="#707070" />
<rect x="774" y="364" width="3" height="1" fill="#707070" />
<rect x="774" y="357" width="3" height="1" fill="#707070" />
<rect x="774" y="350" width="6" height="1" fill="#707070" />
<rect x="774" y="344" width="3" height="1" fill="#707070" />
<rect x="774" y="337" width="3" height="1" fill="#707070" />
<text x="782" y="354" fill="#383838" font-size="14" text-anchor="start" textLength="39.5" lengthAdjust="spacingAndGlyphs" >200,000</text>
<text x="782" y="388" fill="#383838" font-size="14" text-anchor="start" textLength="39.5" lengthAdjust="spacingAndGlyphs" >150,000</text>
<text x="782" y="421" fill="#383838" font-size="14" text-anchor="start" textLength="39.5" lengthAdjust="spacingAndGlyphs" >100,000</text>
<text x="782" y="455" fill="#383838" font-size="14" text-anchor="start" textLength="33.5" lengthAdjust="spacingAndGlyphs" >50,000</text>
<rect x="778" y="461" width="58" height="13" fill="#08c8f8" />
<text x="782" y="472.5" fill="#ffffff" font-size="14" text-anchor="start" textLength="34" lengthAdjust="spacingAndGlyphs" >21,136</text>
<text x="782" y="485" fill="#10c0f0" font-size="14" text-anchor="start" textLength="36" lengthAdjust="spacingAndGlyphs" >55,55%</text>
<rect x="828" y="334" width="8" height="7" fill="#404040" />
<path d="M829.5,335.5 L834.5,339.5 M834.5,335.5 L829.5,339.5" stroke="#fff" stroke-width="1" shape-rendering="auto"/>
<rect x="9" y="493" width="5" height="6" fill="#7c7c7c" />
<rect x="10" y="494" width="3" height="4" fill="#c4c4c4" />
<text x="20" y="501" fill="#78ccb0" font-size="14" text-anchor="start" textLength="22" lengthAdjust="spacingAndGlyphs" ><tspan font-size="12" baseline-shift="1" stroke="#78ccb0" stroke-width="0.15">공시</tspan></text>
<rect x="12" y="500" width="3" height="17" fill="#84d4b4" />
<rect x="24" y="507" width="3" height="10" fill="#84d4b4" />
<rect x="42" y="507" width="3" height="10" fill="#84d4b4" />
<rect x="78" y="507" width="3" height="10" fill="#84d4b4" />
<rect x="143" y="507" width="3" height="10" fill="#84d4b4" />
<rect x="167" y="507" width="3" height="10" fill="#84d4b4" />
<rect x="232" y="507" width="3" height="10" fill="#84d4b4" />
<rect x="238" y="507" width="3" height="10" fill="#84d4b4" />
<rect x="386" y="507" width="3" height="10" fill="#84d4b4" />
<rect x="440" y="507" width="3" height="10" fill="#84d4b4" />
<rect x="452" y="507" width="3" height="10" fill="#84d4b4" />
<rect x="529" y="507" width="3" height="10" fill="#84d4b4" />
<rect x="600" y="507" width="3" height="10" fill="#84d4b4" />
<rect x="774" y="500" width="6" height="1" fill="#707070" />
<rect x="774" y="493" width="3" height="1" fill="#707070" />
<rect x="774" y="507" width="3" height="1" fill="#707070" />
<rect x="774" y="514" width="6" height="1" fill="#707070" />
<text x="782" y="503.5" fill="#383838" font-size="14" text-anchor="start" >2</text>
<rect x="828" y="491" width="8" height="7" fill="#404040" />
<path d="M829.5,492.5 L834.5,496.5 M834.5,492.5 L829.5,496.5" stroke="#fff" stroke-width="1" shape-rendering="auto"/>
<text x="7.5" y="530" fill="#383838" font-size="14" text-anchor="start" textLength="42" lengthAdjust="spacingAndGlyphs" >2024/03</text>
<text x="126" y="530" fill="#383838" font-size="14" text-anchor="start" textLength="12" lengthAdjust="spacingAndGlyphs" >04</text>
<text x="251" y="530" fill="#383838" font-size="14" text-anchor="start" textLength="12" lengthAdjust="spacingAndGlyphs" >05</text>
<text x="370" y="530" fill="#383838" font-size="14" text-anchor="start" textLength="12" lengthAdjust="spacingAndGlyphs" >06</text>
<text x="482" y="530" fill="#383838" font-size="14" text-anchor="start" textLength="12" lengthAdjust="spacingAndGlyphs" >07</text>
<text x="619" y="530" fill="#383838" font-size="14" text-anchor="start" textLength="12" lengthAdjust="spacingAndGlyphs" >08</text>
<text x="781" y="530" fill="#383838" font-size="14" text-anchor="start" textLength="30" lengthAdjust="spacingAndGlyphs" >08/30</text>
</svg></body></html>
